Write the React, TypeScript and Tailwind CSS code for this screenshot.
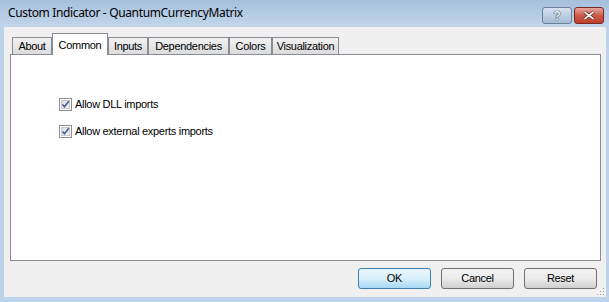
import React from 'react';

const tabs = [
  { label: 'About', w: 'w-[40px]' },
  { label: 'Common', w: 'w-[56px]' },
  { label: 'Inputs', w: 'w-[40px]' },
  { label: 'Dependencies', w: 'w-[81px]' },
  { label: 'Colors', w: 'w-[43px]' },
  { label: 'Visualization', w: 'w-[67px]' },
];

const Check: React.FC<{ label: string }> = ({ label }) => (
  <label className="flex items-center gap-[3px] h-[13px]">
    <span className="w-[13px] h-[13px] border border-[#8e8f8f] bg-white p-px">
      <span className="block w-full h-full border border-[#c6c8cb] bg-gradient-to-br from-[#d9dce1] to-[#f6f6f6]">
        <svg viewBox="0 0 9 9" className="w-[9px] h-[9px] -mt-px -ml-px">
          <path d="M1.5 4.5 L3.5 6.8 L7.8 1.2" fill="none" stroke="#4a5f97" strokeWidth="1.6" />
        </svg>
      </span>
    </span>
    <span>{label}</span>
  </label>
);

const Btn: React.FC<{ label: string; primary?: boolean }> = ({ label, primary }) => (
  <button
    className={
      'w-[73px] h-[21px] rounded-[3px] border text-[11px] text-black ' +
      (primary
        ? 'border-[#3c7fb1] bg-gradient-to-b from-[#eaf6fd] via-[#d9f0fc] to-[#a7d9f5]'
        : 'border-[#707070] bg-gradient-to-b from-[#f2f2f2] via-[#ebebeb] to-[#cfcfcf]')
    }
  >
    {label}
  </button>
);

export default function App() {
  return (
    <div
      className="w-[609px] h-[302px] bg-[#bcd3ea] flex flex-col overflow-hidden tracking-[-0.3px]"
      style={{ fontFamily: '"Liberation Sans", Arial, sans-serif' }}
    >
      {/* title bar */}
      <div className="h-[27px] shrink-0 flex items-center justify-between bg-gradient-to-b from-[#a6c0dc] to-[#c2d6eb] pl-[8px] pr-[5px]">
        <span className="text-[12px] text-black pb-[2px] tracking-[-0.35px]" style={{ fontFamily: '"Noto Sans", sans-serif' }}>
          Custom Indicator - QuantumCurrencyMatrix
        </span>
        <div className="flex gap-[2px] self-start mt-[7px]">
          <div className="w-[30px] h-[17px] rounded-[3px] border border-[#6d7f96] bg-gradient-to-b from-[#d6e3f1] to-[#a6bcd6] flex items-center justify-center text-[12px] font-bold text-[#eef3f9] [text-shadow:0_0_1px_#1c2636,0_0_1px_#1c2636]">
            ?
          </div>
          <div className="w-[30px] h-[17px] rounded-[3px] border border-[#7b2a23] bg-gradient-to-b from-[#e6a79c] via-[#cc5a4a] to-[#c0402f] flex items-center justify-center">
            <svg viewBox="0 0 12 9" className="w-[12px] h-[9px]">
              <path d="M1.5 1 L10.5 8 M10.5 1 L1.5 8" stroke="#4b1a14" strokeWidth="3" />
              <path d="M1.5 1 L10.5 8 M10.5 1 L1.5 8" stroke="#fff" strokeWidth="1.6" />
            </svg>
          </div>
        </div>
      </div>

      {/* client area */}
      <div className="flex-1 ml-[4px] mr-[3px] mb-[5px] bg-[#f0f0f0] flex flex-col pt-[6px] pl-[6px] pr-[5px] text-[11px] text-black relative">
        <div className="flex items-end h-[21px] pl-[2px]">
          {tabs.map((t) =>
            t.label === 'Common' ? (
              <div
                key={t.label}
                className={t.w + ' h-[22px] -mb-px z-10 bg-white border border-b-0 border-[#898c95] flex items-start justify-center pt-[3px]'}
              >
                {t.label}
              </div>
            ) : (
              <div
                key={t.label}
                className={t.w + ' h-[17px] border border-b-0 border-[#898c95] bg-gradient-to-b from-[#f2f2f2] to-[#dcdcdc] flex items-center justify-center'}
              >
                {t.label}
              </div>
            )
          )}
        </div>
        <div className="h-[207px] border border-[#898c95] bg-white flex flex-col gap-[14px] pt-[43px] pl-[48px]">
          <Check label="Allow DLL imports" />
          <Check label="Allow external experts imports" />
        </div>
        <div className="flex justify-end gap-[10px] mt-[7px] pr-[4px]">
          <Btn label="OK" primary />
          <Btn label="Cancel" />
          <Btn label="Reset" />
        </div>
        <svg viewBox="0 0 10 10" className="absolute right-[1px] bottom-[1px] w-[10px] h-[10px]">
          {[
            [8, 2],
            [8, 5],
            [5, 5],
            [8, 8],
            [5, 8],
            [2, 8],
          ].map(([x, y], i) => (
            <rect key={i} x={x} y={y} width="1" height="1" fill="#a0a0a0" />
          ))}
        </svg>
      </div>
    </div>
  );
}
